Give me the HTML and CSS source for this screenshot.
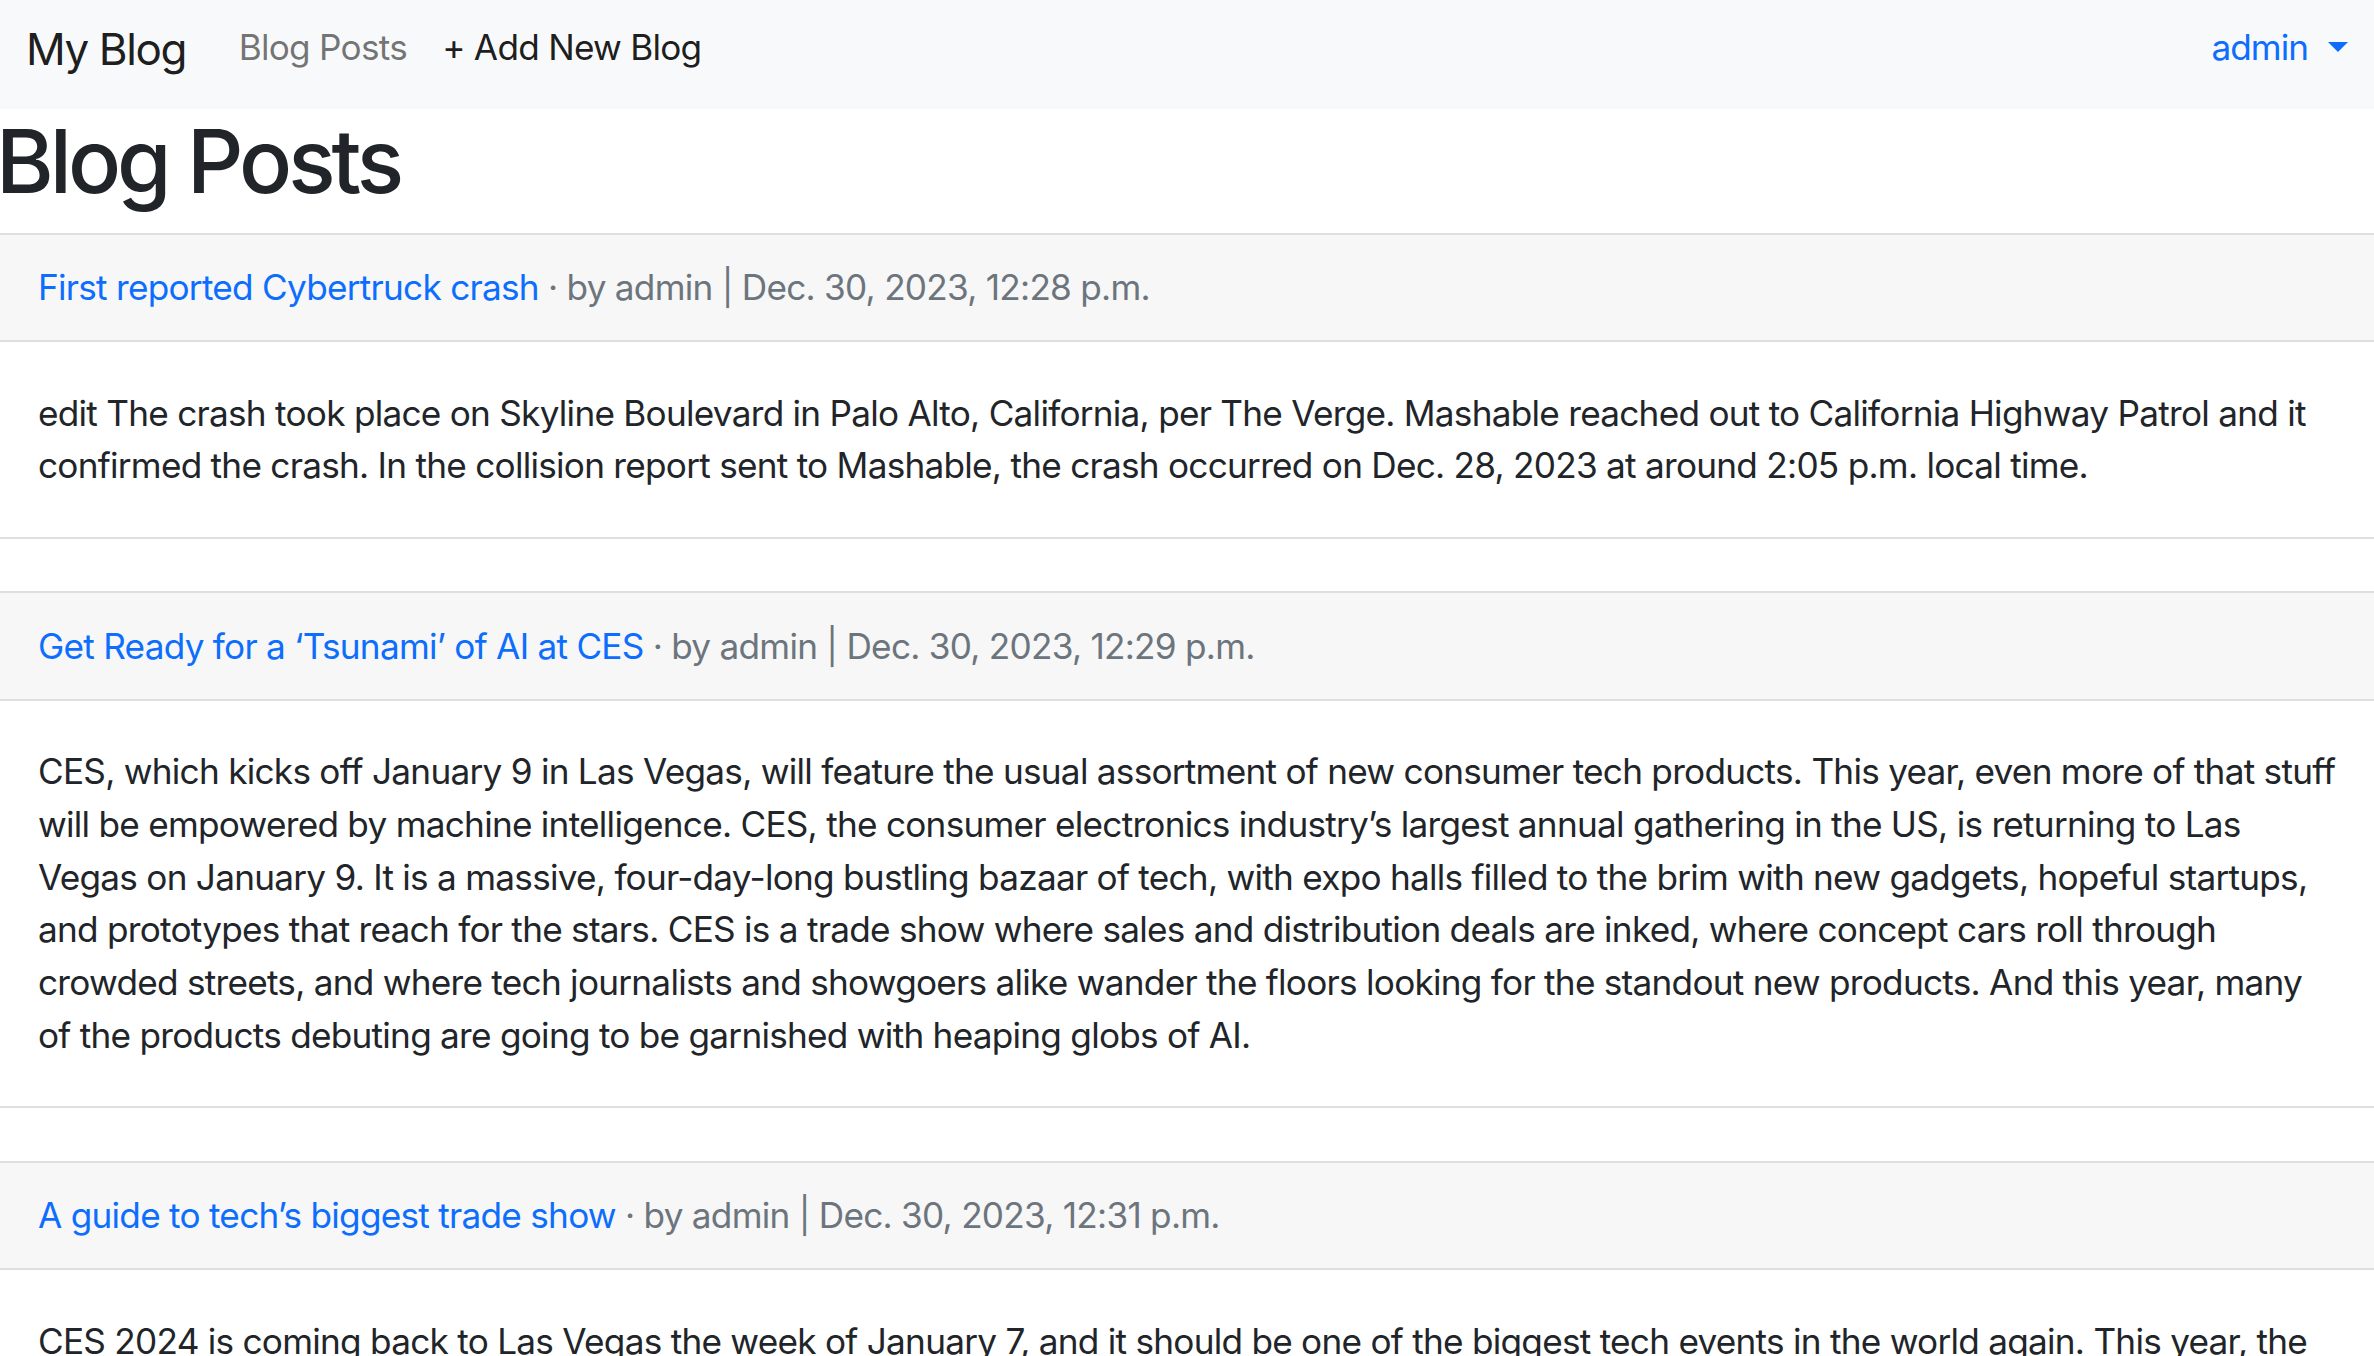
FILE: index.html
```html
<!DOCTYPE html>
<html lang="en">
<head>
<meta charset="utf-8">
<title>Blog Posts</title>
<link rel="stylesheet" href="styles.css">
</head>
<body>
<nav class="navbar">
  <a class="brand" href="#">My Blog</a>
  <div class="nav-links">
    <a class="nav-link" href="#">Blog Posts</a>
    <a class="nav-link active" href="#">+ Add New Blog</a>
  </div>
  <a class="user" href="#">admin<span class="caret"></span></a>
</nav>
<main class="content">
  <h1 class="title">Blog Posts</h1>

  <article class="card">
    <div class="card-header"><a class="post-link" href="#">First reported Cybertruck crash</a><span class="meta"> · by admin | Dec. 30, 2023, 12:28 p.m.</span></div>
    <div class="card-body"><p>edit The crash took place on Skyline Boulevard in Palo Alto, California, per The Verge. Mashable reached out to California Highway Patrol and it confirmed the crash. In the collision report sent to Mashable, the crash occurred on Dec. 28, 2023 at around 2:05 p.m. local time.</p></div>
  </article>

  <article class="card">
    <div class="card-header"><a class="post-link" href="#">Get Ready for a ‘Tsunami’ of AI at CES</a><span class="meta"> · by admin | Dec. 30, 2023, 12:29 p.m.</span></div>
    <div class="card-body"><p>CES, which kicks off January 9 in Las Vegas, will feature the usual assortment of new consumer tech products. This year, even more of that stuff will be empowered by machine intelligence. CES, the consumer electronics industry’s largest annual gathering in the US, is returning to Las Vegas on January 9. It is a massive, four-day-long bustling bazaar of tech, with expo halls filled to the brim with new gadgets, hopeful startups, and prototypes that reach for the stars. CES is a trade show where sales and distribution deals are inked, where concept cars roll through crowded streets, and where tech journalists and showgoers alike wander the floors looking for the standout new products. And this year, many of the products debuting are going to be garnished with heaping globs of AI.</p></div>
  </article>

  <article class="card">
    <div class="card-header"><a class="post-link" href="#">A guide to tech’s biggest trade show</a><span class="meta"> · by admin | Dec. 30, 2023, 12:31 p.m.</span></div>
    <div class="card-body"><p>CES 2024 is coming back to Las Vegas the week of January 7, and it should be one of the biggest tech events in the world again. This year, the show floor will be packed with laptops, TVs, smart home gadgets, cars and, of course, plenty of AI.</p></div>
  </article>
</main>
</body>
</html>
```

FILE: styles.css
```css
* { box-sizing: border-box; }
html, body {
  margin: 0;
  padding: 0;
  background: #fff;
}
body {
  font-family: Inter, "Noto Sans", "Liberation Sans", sans-serif;
  font-size: 35.2px;
  line-height: 52.8px;
  letter-spacing: -0.75px;
  color: #212529;
}
a { text-decoration: none; }

.navbar {
  display: flex;
  align-items: flex-start;
  height: 108.5px;
  padding: 16px 26px 0 26px;
  background: #f8f9fa;
}
.brand {
  font-size: 44px;
  line-height: 66px;
  letter-spacing: -1.4px;
  color: rgba(0, 0, 0, 0.9);
  margin-right: 35px;
}
.nav-links {
  display: flex;
  flex: 1;
  margin-top: 5px;
}
.nav-link {
  padding: 0 17.6px;
  color: rgba(0, 0, 0, 0.55);
}
.nav-link.active { color: rgba(0, 0, 0, 0.9); }
.user {
  margin-top: 5px;
  color: #0d6efd;
  display: flex;
  align-items: center;
  letter-spacing: -1px;
}
.caret {
  display: inline-block;
  margin-left: 20px;
  width: 0;
  height: 0;
  border-top: 10.5px solid #0d6efd;
  border-left: 10px solid transparent;
  border-right: 10px solid transparent;
}

.title {
  margin: 0 0 19px -4px;
  font-size: 88px;
  line-height: 105.6px;
  font-weight: 500;
  letter-spacing: -4px;
}

.card {
  border-top: 2px solid #dfdfdf;
  border-bottom: 2px solid #dfdfdf;
  margin-bottom: 52.8px;
}
.card-header {
  background: #f7f7f7;
  padding: 26.2px 38px;
  border-bottom: 2px solid #dfdfdf;
}
.post-link { color: #0d6efd; }
.meta { color: #6c757d; }
.card-body {
  padding: 44.4px 36px 44.4px 38px;
}
.card-body p { margin: 0; }
```
